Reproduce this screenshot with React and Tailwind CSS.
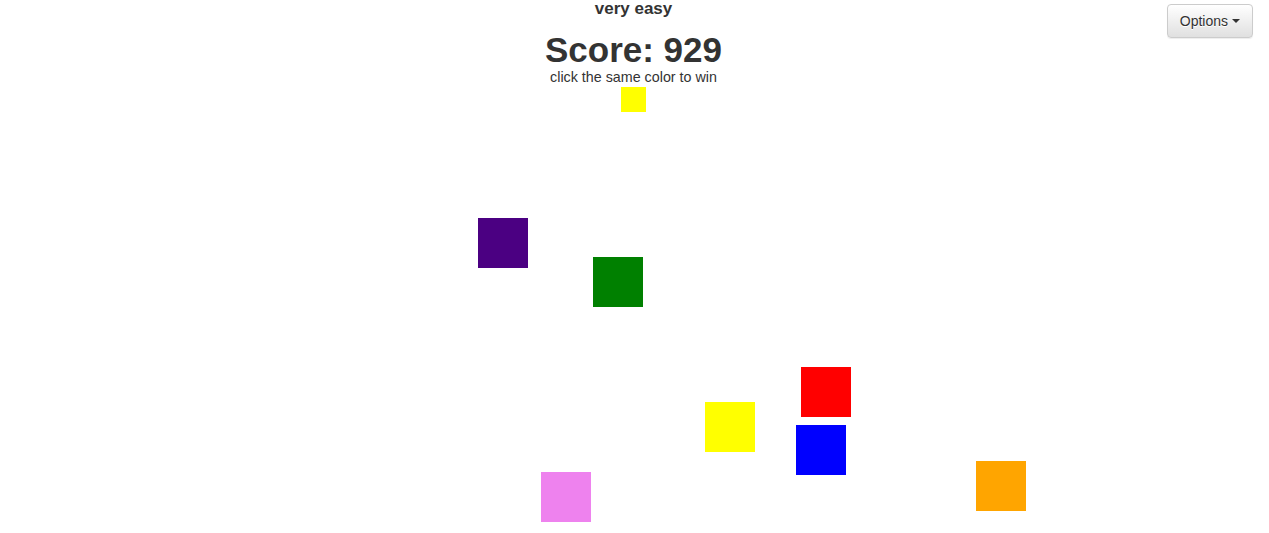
import React from 'react';

const squares = [
  { color: 'bg-[#4b0082]', left: 'left-[478px]', top: 'top-[218px]' },
  { color: 'bg-[#008000]', left: 'left-[593px]', top: 'top-[257px]' },
  { color: 'bg-[#ff0000]', left: 'left-[801px]', top: 'top-[367px]' },
  { color: 'bg-[#ffff00]', left: 'left-[705px]', top: 'top-[402px]' },
  { color: 'bg-[#0000ff]', left: 'left-[796px]', top: 'top-[425px]' },
  { color: 'bg-[#ee82ee]', left: 'left-[541px]', top: 'top-[472px]' },
  { color: 'bg-[#ffa500]', left: 'left-[976px]', top: 'top-[461px]' },
];

function App() {
  return (
    <div className="relative w-full h-[533px] bg-white overflow-hidden text-[#333] font-['Liberation_Sans',Helvetica,Arial,sans-serif]">
      {/* header */}
      <div className="flex flex-col items-center pr-[2px]">
        <div className="text-[17px] leading-[18px] font-bold">very easy</div>
        <h1 className="mt-[12px] text-[35px] leading-[39px] font-bold">Score: 929</h1>
        <p className="text-[14.3px] leading-[16px]">click the same color to win</p>
        {/* target color */}
        <div className="mt-[2px] w-[25px] h-[25px] bg-[#ffff00]"></div>
      </div>

      {/* options dropdown */}
      <button
        type="button"
        className="absolute top-[4px] right-[16px] flex items-center h-[34px] px-[12px] text-[14px] text-[#333] border border-[#ccc] rounded-[4px] bg-gradient-to-b from-white to-[#e0e0e0] shadow-[0_1px_1px_rgba(0,0,0,0.075)] [text-shadow:0_1px_0_#fff]"
      >
        Options
        <span className="inline-block ml-[4px] w-0 h-0 border-t-[4px] border-x-[4px] border-x-transparent border-t-[#333]"></span>
      </button>

      {/* game board */}
      {squares.map((sq, i) => (
        <div key={i} className={`absolute w-[50px] h-[50px] ${sq.color} ${sq.left} ${sq.top}`}></div>
      ))}
    </div>
  );
}

export default App;
